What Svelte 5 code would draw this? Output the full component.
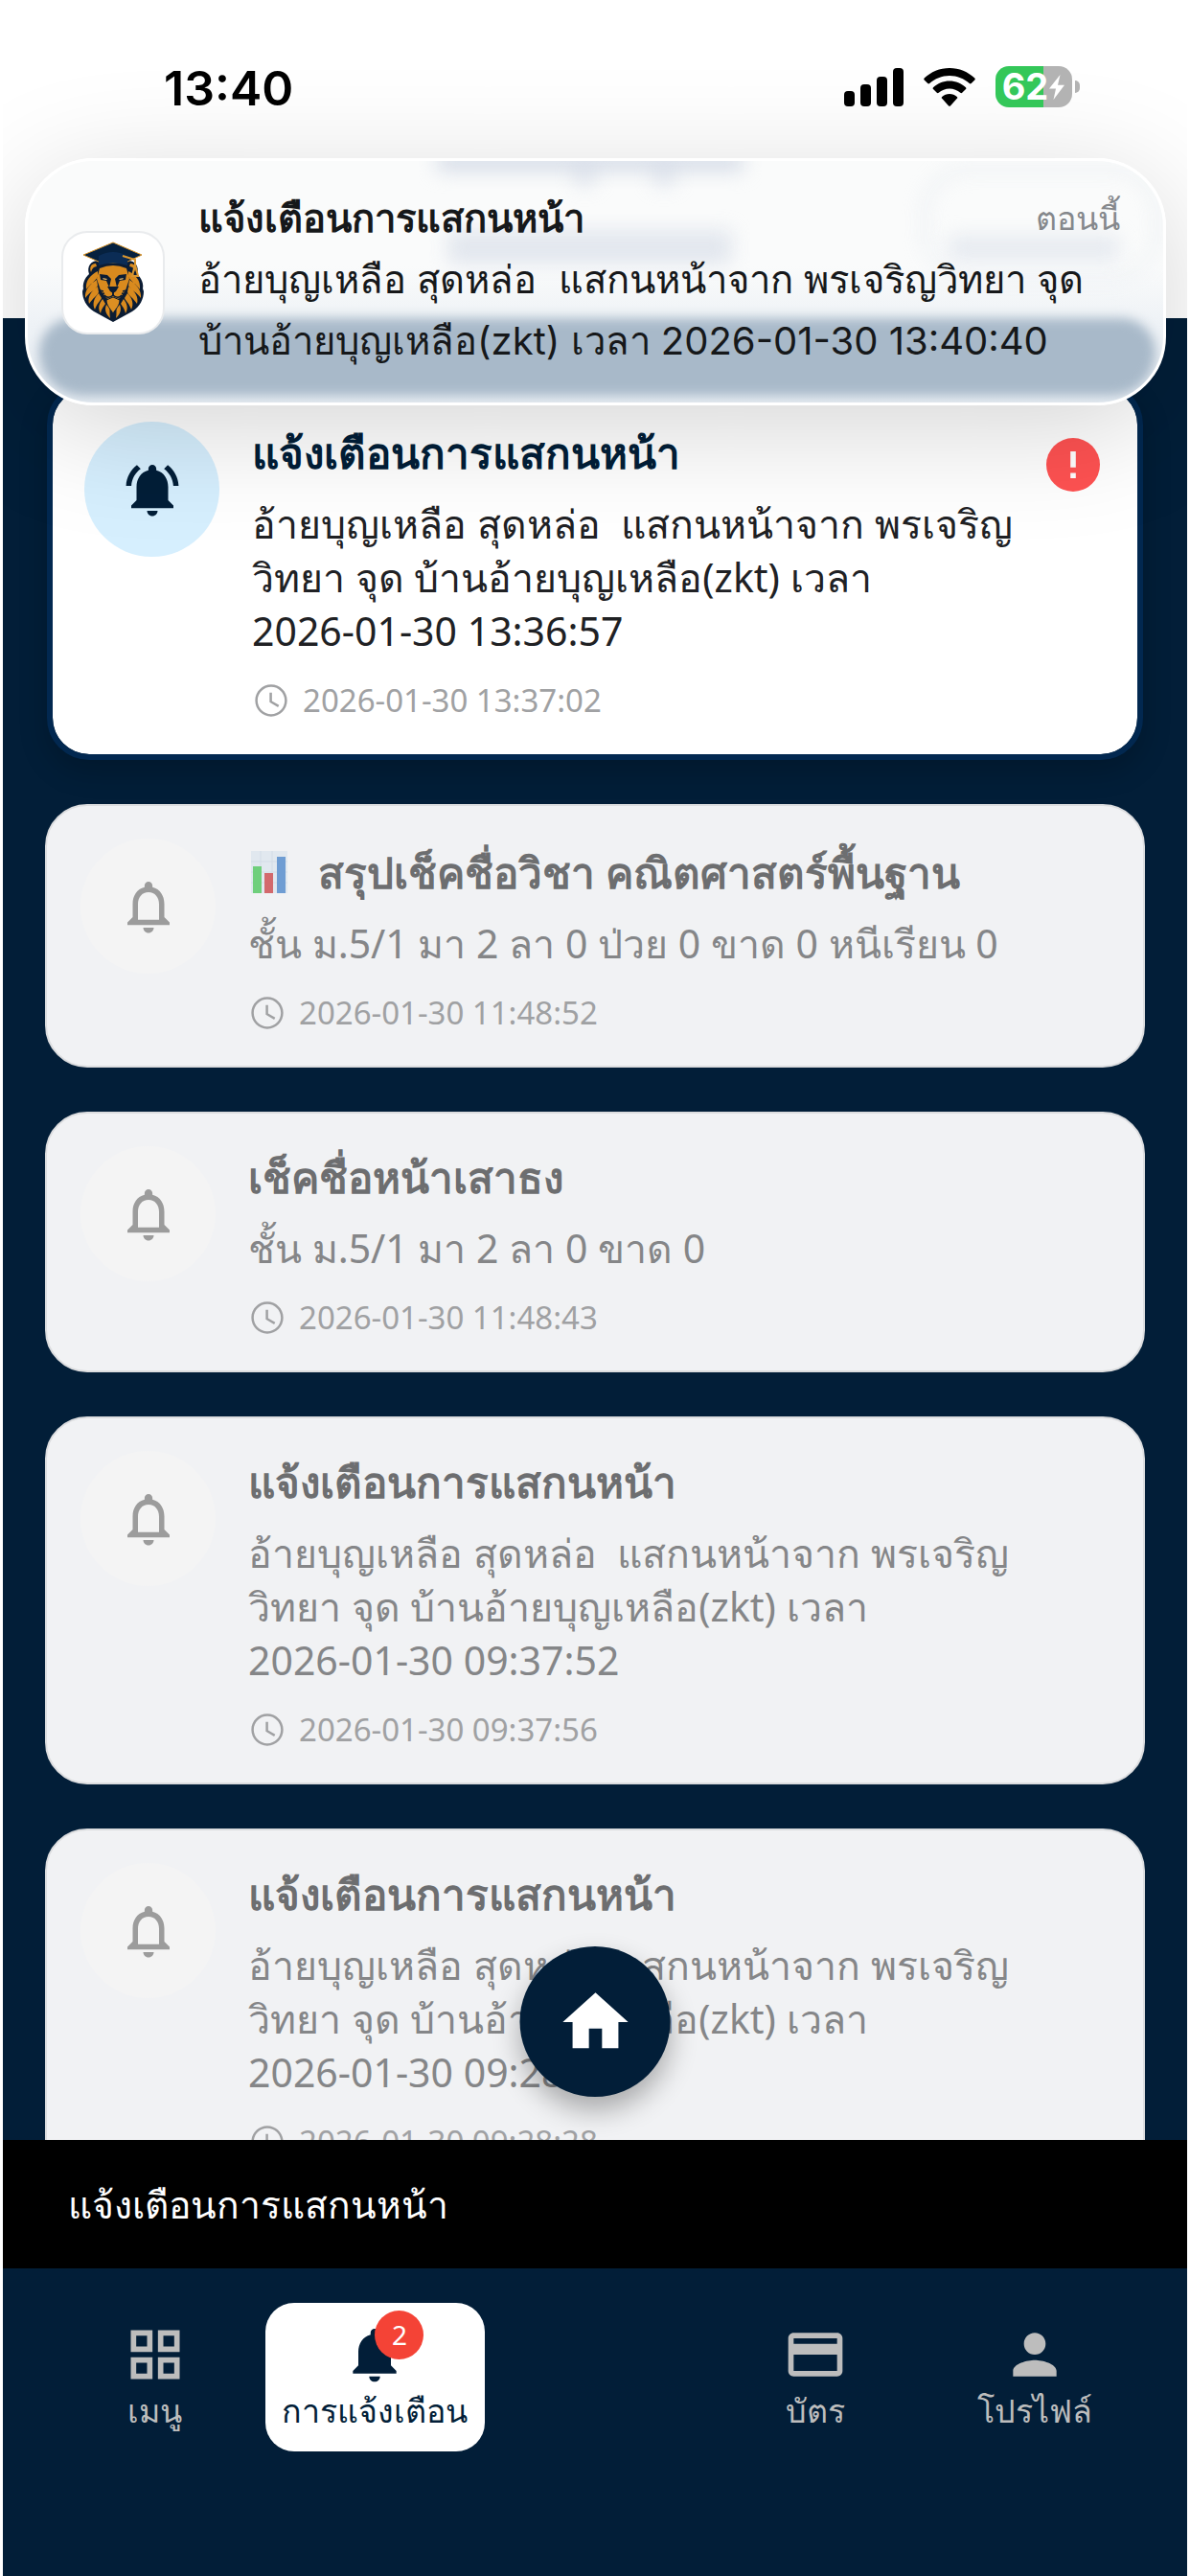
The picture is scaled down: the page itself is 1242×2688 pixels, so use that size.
<script>
  const scan = (stamp) => [
    'อ้ายบุญเหลือ สุดหล่อ\u00a0 แสกนหน้าจาก พรเจริญ',
    'วิทยา จุด บ้านอ้ายบุญเหลือ(zkt) เวลา',
    stamp
  ];

  const notices = [
    { title: 'แจ้งเตือนการแสกนหน้า', lines: scan('2026-01-30 13:36:57'), time: '2026-01-30 13:37:02', unread: true },
    { title: 'สรุปเช็คชื่อวิชา คณิตศาสตร์พื้นฐาน', lines: ['ชั้น ม.5/1 มา 2 ลา 0 ป่วย 0 ขาด 0 หนีเรียน 0'], time: '2026-01-30 11:48:52', chart: true },
    { title: 'เช็คชื่อหน้าเสาธง', lines: ['ชั้น ม.5/1 มา 2 ลา 0 ขาด 0'], time: '2026-01-30 11:48:43' },
    { title: 'แจ้งเตือนการแสกนหน้า', lines: scan('2026-01-30 09:37:52'), time: '2026-01-30 09:37:56' },
    { title: 'แจ้งเตือนการแสกนหน้า', lines: scan('2026-01-30 09:28:24'), time: '2026-01-30 09:28:28' }
  ];

  const bell = 'M12 22c1.1 0 2-.9 2-2h-4c0 1.1.89 2 2 2zm6-6v-5c0-3.07-1.64-5.64-4.5-6.32V4c0-.83-.67-1.5-1.5-1.5s-1.5.67-1.5 1.5v.68C7.63 5.36 6 7.92 6 11v5l-2 2v1h16v-1l-2-2z';

  const tabs = [
    { label: 'เมนู', path: 'M3 3v8h8V3H3zm6 6H5V5h4v4zm-6 4v8h8v-8H3zm6 6H5v-4h4v4zm4-16v8h8V3h-8zm6 6h-4V5h4v4zm-6 4v8h8v-8h-8zm6 6h-4v-4h4v4z' },
    { label: 'การแจ้งเตือน', path: bell, active: true, count: 2 },
    null,
    { label: 'บัตร', path: 'M20 4H4c-1.11 0-1.99.89-1.99 2L2 18c0 1.11.89 2 2 2h16c1.11 0 2-.89 2-2V6c0-1.11-.89-2-2-2zm0 14H4v-6h16v6zm0-10H4V6h16v2z' },
    { label: 'โปรไฟล์', path: 'M12 12c2.21 0 4-1.79 4-4s-1.79-4-4-4-4 1.79-4 4 1.79 4 4 4zm0 2c-2.67 0-8 1.34-8 4v2h16v-2c0-2.66-5.33-4-8-4z' }
  ];
</script>

{#snippet mane()}
  <path d="M34 32c-5 0-7 4-5 9 1-4 3-6 6-6zM36 40C28 44 23 50 24 59c4-6 9-8 12-13zM35 49C28 53 22 60 23 68c4-6 10-8 13-13zM36 56C29 61 25 67 27 74c4-6 8-8 10-12zM37 63C32 68 30 74 33 80c2-6 5-8 7-12zM41 69C37 74 36 79 39 84c1-5 3-7 5-10zM45 75c-2 5-1 9 4 14-1-5 0-8-1-12z" />
{/snippet}

{#snippet face()}
  <path fill="#0b1c33" d="M38 43l8 1 4 4-2 9-3-7-6-1z" />
  <path fill="#f0c070" d="M41 47l5 1-1 1-3-.500z" />
  <path fill="none" stroke="#0b1c33" stroke-width="1.500" d="M52 61v4c-3 3-7 3-9 0M38 60l4 1M39 64l4-1" />
{/snippet}

<div class="app">
  <header class="status">
    <time class="clock">13:40</time>
    <div class="indicators">
      <svg class="signal" viewBox="0 0 62 40" role="img" aria-label="สัญญาณ">
        <rect x="0" y="24" width="11" height="16" rx="4" /><rect x="17" y="17" width="11" height="23" rx="4" />
        <rect x="34" y="9" width="11" height="31" rx="4" /><rect x="51" y="0" width="11" height="40" rx="4" />
      </svg>
      <svg class="wifi" viewBox="0 0 54 40" role="img" aria-label="Wi-Fi">
        <path d="M27 0C17 0 7.500 4 .7 10.600q-.9 1 0 1.900l3.600 3.600q.9.800 1.900 0C11.800 10.900 19 7.900 27 7.900s15.200 3 20.800 8.200q1 .8 1.900 0l3.600-3.600q.9-.9 0-1.900C46.500 4 37 0 27 0z" />
        <path d="M27 13.500c-6.500 0-12.500 2.500-17 6.700q-1 1 0 1.900l3.800 3.700q.9.800 1.900 0C18.800 23 22.700 21.400 27 21.400s8.200 1.600 11.300 4.400q1 .8 1.900 0l3.800-3.700q1-.9 0-1.900c-4.500-4.200-10.500-6.700-17-6.700z" />
        <path d="M27 27c-3 0-5.700 1.100-7.800 3q-1 .9 0 1.800l6.700 7.400q1.100 1 2.200 0l6.700-7.400q1-.9 0-1.800c-2.100-1.900-4.800-3-7.800-3z" />
      </svg>
      <div class="battery">
        <span>62</span>
        <svg viewBox="0 0 18 28" aria-hidden="true"><path d="M12.500 1 1 15.500h7L5.500 27 17 11.800h-7z" /></svg>
      </div>
    </div>
  </header>

  <aside class="banner">
    <div class="haze" aria-hidden="true">
      <i class="tint"></i><i class="top"></i><i class="mark"></i><i class="mark second"></i><i class="heading-blur"></i><i class="pill"></i><i class="pill-label"></i>
    </div>
    <svg class="logo" viewBox="0 0 104 104" role="img" aria-label="โรงเรียน">
      <path fill="#0b1c33" d="M38 29C30 28 24 34 27 43 22 47 20 54 21 58l-1 3c0 8 4 16 12 21l20 11 20-11c8-5 12-13 12-21l-1-3c1-4-1-11-6-15 3-9-3-15-11-14z" />
      <g fill="#d98a1e">
        {@render mane()}
        <g transform="matrix(-1 0 0 1 104 0)">{@render mane()}</g>
        <path d="M38 37q14-6 28 0l3 11-4 12-6 8-7 3-7-3-6-8-4-12z" />
      </g>
      {@render face()}
      <g transform="matrix(-1 0 0 1 104 0)">{@render face()}</g>
      <path fill="#0b1c33" d="M46 56h12l-3 5-3 2-3-2z" />
      <path fill="#dc8f22" stroke="#0b1c33" stroke-width="1" d="M52 67l-7 3c0 6 4 9 7 14 3-5 7-8 7-14z" />
      <path fill="#06213f" stroke="#d9962f" d="M52 10 82 23 65 31H39L21 23z" />
      <path fill="#0b2c55" d="M37 24q15-8 30 0v10q-15-5-30 0z" />
      <path fill="none" stroke="#d9962f" stroke-width="2" d="M62 24l13 4v5l-3 12h6l-3-12" />
    </svg>
    <div class="message">
      <div class="heading"><h2>แจ้งเตือนการแสกนหน้า</h2><span>ตอนนี้</span></div>
      <p>อ้ายบุญเหลือ สุดหล่อ&nbsp; แสกนหน้าจาก พรเจริญวิทยา จุด<br />บ้านอ้ายบุญเหลือ(zkt) เวลา 2026-01-30 13:40:40</p>
    </div>
  </aside>

  <main>
    <ul>
      {#each notices as n}
        <li class="card" class:unread={n.unread}>
          <div class="avatar">
            <svg viewBox="0 0 24 24" aria-hidden="true">
              {#if n.unread}
                <path d="M7.580 4.080L6.150 2.650C3.750 4.480 2.170 7.300 2.030 10.500h2c.15-2.650 1.510-4.970 3.550-6.420zm12.390 6.420h2c-.15-3.200-1.730-6.020-4.120-7.850l-1.420 1.430c2.020 1.450 3.390 3.770 3.540 6.420zM18 11c0-3.070-1.640-5.640-4.500-6.320V4c0-.83-.67-1.500-1.500-1.500s-1.500.67-1.500 1.500v.68C7.630 5.360 6 7.920 6 11v5l-2 2v1h16v-1l-2-2v-5zm-6 11c1.100 0 2-.9 2-2h-4c0 1.100.9 2 2 2z" />
              {:else}
                <path d="{bell}m-2 1H8v-6c0-2.480 1.510-4.500 4-4.500s4 2.020 4 4.500v6z" />
              {/if}
            </svg>
          </div>
          <div class="body">
            <h3 class:with-chart={n.chart}>
              {#if n.chart}
                <svg class="chart" viewBox="0 0 38 44" role="img" aria-label="กราฟ">
                  <rect width="38" height="44" fill="#e1e8ef" />
                  <path stroke="#d3dce6" d="M0 11h38M0 22h38M0 33h38M10 0v44M22 0v44" />
                  <rect x="2" y="16" width="9" height="28" fill="#6fcf7c" /><rect x="14" y="23" width="9" height="21" fill="#d3696c" /><rect x="27" y="6" width="9" height="38" fill="#6f9dd3" />
                </svg>
              {/if}
              {n.title}
            </h3>
            <p>{#each n.lines as line}<span>{line}</span>{/each}</p>
            <div class="when">
              <svg viewBox="0 0 24 24" aria-hidden="true"><path d="M11.990 2C6.470 2 2 6.480 2 12s4.470 10 9.990 10C17.520 22 22 17.520 22 12S17.520 2 11.990 2zM12 20.500c-4.700 0-8.500-3.800-8.500-8.500S7.300 3.500 12 3.500s8.500 3.800 8.500 8.500-3.800 8.500-8.500 8.500zM12.500 7H11v6l5.250 3.150.75-1.230-4.500-2.670z" /></svg>
              <time>{n.time}</time>
            </div>
          </div>
          {#if n.unread}
            <svg class="alert" viewBox="2 2 20 20" role="img" aria-label="ยังไม่ได้อ่าน"><circle cx="12" cy="12" r="10" fill="#ff5252" /><path fill="#fff" d="M11 7h2v6h-2zM11 15h2v2h-2z" /></svg>
          {/if}
        </li>
      {/each}
    </ul>
    <button class="home" aria-label="หน้าหลัก"><svg viewBox="0 0 24 24" aria-hidden="true"><path d="M10 20v-6h4v6h5v-8h3L12 3 2 12h3v8z" /></svg></button>
  </main>

  <div class="snackbar" role="status">แจ้งเตือนการแสกนหน้า</div>

  <nav>
    {#each tabs as t}
      {#if t}
        <button class:active={t.active}>
          <span class="icon">
            <svg viewBox="0 0 24 24" aria-hidden="true"><path d={t.path} /></svg>
            {#if t.count}<b>{t.count}</b>{/if}
          </span>
          <span class="label">{t.label}</span>
        </button>
      {:else}
        <span></span>
      {/if}
    {/each}
  </nav>
</div>

<style>
  :global(body) { background: #fff; }
  * { box-sizing: border-box; }
  h2, h3, p, ul { margin: 0; padding: 0; }
  svg { display: block; fill: currentColor; flex: none; }

  .app {
    position: relative;
    display: flex;
    flex-direction: column;
    height: 100vh;
    margin: 0 3px;
    overflow: hidden;
    font-family: "Noto Sans", "Open Sans", sans-serif;
    color: #202124;
  }

  .status {
    display: flex;
    justify-content: space-between;
    align-items: flex-start;
    height: 332px;
    flex: none;
    padding: 69px 112px 0 168px;
    background: #fff;
    font-family: Inter, sans-serif;
    color: #000;
  }
  .clock, .indicators { position: relative; z-index: 3; }
  .clock { font-size: 50px; line-height: 46px; font-weight: 600; }
  .indicators { display: flex; align-items: center; gap: 21px; }
  .signal { width: 62px; height: 40px; }
  .wifi { width: 54px; height: 40px; }
  .battery {
    position: relative;
    display: flex;
    align-items: center;
    justify-content: center;
    width: 80px;
    height: 43px;
    margin-right: 8px;
    border-radius: 14px;
    background: linear-gradient(90deg, #34c759 62%, #b3b3b3 62%);
    color: #fff;
    font-size: 38px;
    line-height: 43px;
    font-weight: 700;
  }
  .battery svg { width: 18px; height: 28px; }
  .battery::after {
    content: "";
    position: absolute;
    left: 83px;
    top: 15px;
    width: 5px;
    height: 13px;
    border-radius: 0 6px 6px 0;
    background: #b3b3b3;
  }

  .banner {
    position: absolute;
    z-index: 2;
    top: 165px;
    left: 23px;
    right: 22px;
    display: flex;
    align-items: center;
    gap: 37px;
    min-height: 258px;
    padding: 28px 45px 32px 37px;
    border: 3px solid #fff;
    border-radius: 72px;
    background: linear-gradient(#fafbfb 0, #fafbfb 110px, #eef2f6 170px, #e6ecf2 100%);
    box-shadow: 0 24px 120px rgba(0, 0, 0, 0.17);
    color: #16181a;
    font-family: Inter, sans-serif;
  }
  .haze { position: absolute; inset: 0; overflow: hidden; border-radius: 69px; }
  .haze i { position: absolute; filter: blur(10px); background: #d3dae6; }
  .haze .tint { left: 12px; right: 8px; top: 164px; bottom: 7px; border-radius: 50px 50px 64px 64px; background: #a8b9c9; filter: blur(6px); }
  .haze .top { left: 36%; top: -8px; width: 27%; height: 18px; }
  .haze .mark { left: 48%; top: 0; width: 24px; height: 26px; opacity: 0.6; }
  .haze .second { left: 55%; }
  .haze .heading-blur { left: 37%; top: 72px; width: 25%; height: 36px; opacity: 0.6; }
  .haze .pill { right: 3px; top: 6px; width: 21%; height: 118px; background: none; border: 5px solid #dfe5ec; border-radius: 50px; opacity: 0.7; }
  .haze .pill-label { right: 46px; top: 78px; width: 15%; height: 26px; opacity: 0.5; }
  .logo { position: relative; width: 104px; height: 104px; margin-top: 5px; border-radius: 25px; background: #fff; box-shadow: 0 0 0 2px #e9ebed; }
  .message { position: relative; flex: 1; font-size: 40px; line-height: 64px; white-space: nowrap; }
  .heading { display: flex; justify-content: space-between; }
  .heading h2 { font-size: 40px; font-weight: 600; }
  .heading span { font-size: 34px; color: #85888c; }

  main {
    position: relative;
    flex: 1;
    min-height: 0;
    overflow: hidden;
    background: #021e38;
  }
  ul {
    display: flex;
    flex-direction: column;
    gap: 46px;
    padding: 67px 44px 0;
    list-style: none;
  }
  .card {
    display: flex;
    align-items: flex-start;
    gap: 34px;
    padding: 34px 36px 31px 35px;
    border: 2px solid #dcdddf;
    border-radius: 44px;
    background: #f1f2f4;
    color: #858688;
  }
  .unread {
    margin: 0 2px;
    padding: 35px 39px 32px 33px;
    border: 6px solid #022850;
    background: #fff;
    background-clip: padding-box;
    box-shadow: 0 12px 30px rgba(0, 0, 0, 0.2);
    color: #202124;
  }
  .avatar {
    display: grid;
    place-items: center;
    flex: none;
    width: 141px;
    height: 141px;
    border-radius: 50%;
    background: #f4f4f4;
    color: #9c9c9c;
  }
  .avatar svg { width: 66px; height: 66px; }
  .unread .avatar { background: #d6effe; color: #021e38; }
  .body { flex: 1; min-width: 0; padding-top: 2px; white-space: nowrap; }
  h3 {
    display: flex;
    align-items: center;
    gap: 32px;
    font-size: 44px;
    line-height: 60px;
    font-weight: 600;
    color: #6d6e70;
  }
  .with-chart { padding-top: 3px; }
  .chart { width: 38px; height: 44px; margin-left: 3px; }
  .unread h3 { color: #021e38; }
  .body p { margin-top: 16px; font-size: 41px; line-height: 56px; }
  .body p span { display: block; }
  .when {
    display: flex;
    align-items: center;
    gap: 13px;
    margin-top: 21px;
    font-size: 33px;
    line-height: 48px;
    color: #a0a1a3;
  }
  .when svg { width: 40px; height: 40px; }
  .alert { width: 56px; height: 56px; margin-top: 17px; }

  .home {
    position: absolute;
    left: 50%;
    bottom: 45px;
    transform: translateX(-50%);
    display: grid;
    place-items: center;
    width: 157px;
    height: 157px;
    padding: 0;
    border: 0;
    border-radius: 50%;
    background: #021e38;
    color: #fff;
    box-shadow: 0 14px 28px rgba(0, 0, 0, 0.3);
  }
  .home svg { width: 82px; height: 82px; }

  .snackbar {
    flex: none;
    padding: 35px 68px;
    background: #000;
    color: #fff;
    font-size: 39px;
    line-height: 64px;
  }

  nav {
    flex: none;
    display: grid;
    grid-template-columns: repeat(5, 1fr);
    align-items: start;
    padding: 36px 44px 130px;
    background: #021e38;
  }
  nav button {
    display: flex;
    flex-direction: column;
    align-items: center;
    height: 155px;
    padding: 20px 0;
    border: 0;
    border-radius: 30px;
    background: none;
    color: #bdbdbd;
    font: inherit;
    font-size: 34px;
    line-height: 48px;
    white-space: nowrap;
  }
  nav .active { background: #fff; color: #021e38; }
  .icon { position: relative; }
  .icon svg { width: 68px; height: 68px; }
  .icon b {
    position: absolute;
    left: 34px;
    top: -12px;
    width: 51px;
    height: 51px;
    border-radius: 50%;
    background: #f44336;
    color: #fff;
    font-size: 28px;
    line-height: 51px;
    font-weight: 400;
    text-align: center;
  }
</style>
